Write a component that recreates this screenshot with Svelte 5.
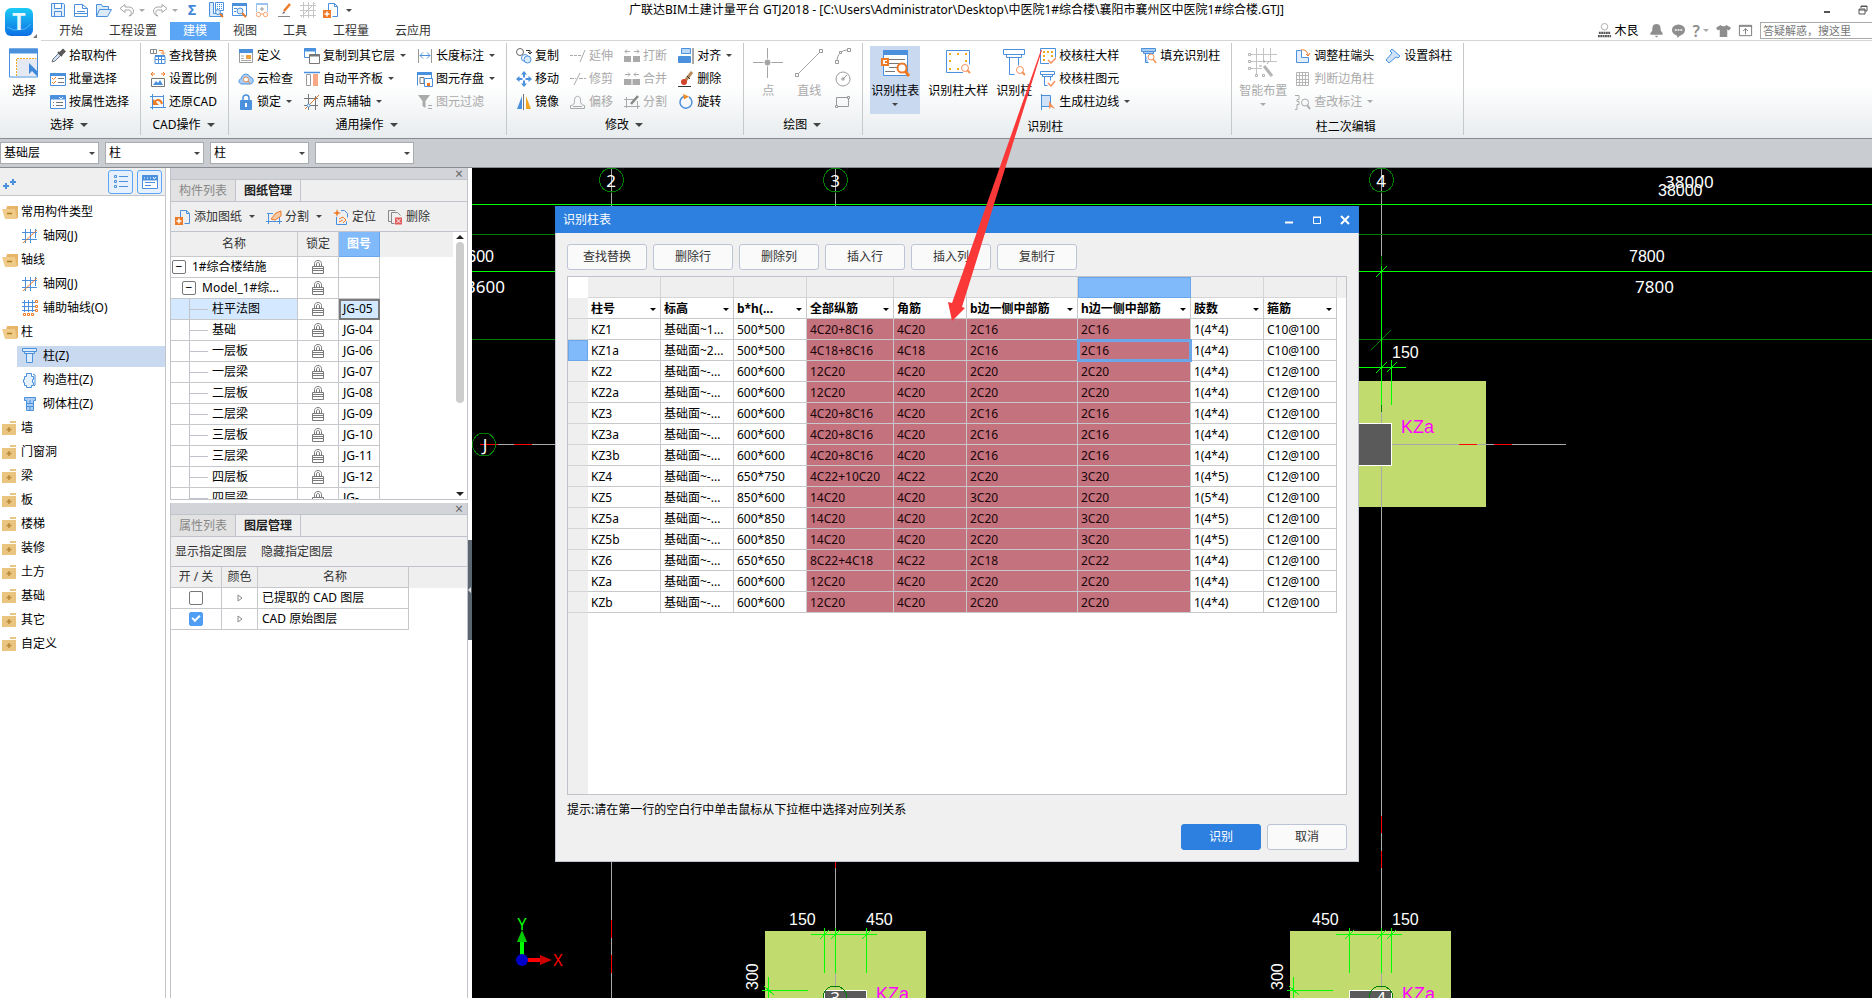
<script lang="ts">
  type Item = { icon: string; label?: string; menu?: boolean; off?: boolean; active?: boolean };

  type Group = {
    label: string;
    menu?: boolean;
    tight?: boolean;
    big: Item[];
    cols: Item[][];
  };

  type Node = { label: string; icon?: string; open?: boolean; active?: boolean };

  // small icons use a 16 unit box, names ending in "Big" a 30 unit box
  const icons: Record<string, string> = {
    save: '<path d="M1.5 1.5h12l1 1v12h-13zM4.5 1.5v5h7v-5M4.5 14.5v-5h7v5" fill="#e3effc"/>',
    doc: '<path d="M1.5 2.5h8l5 4v8h-13zM9.5 2.5v4h5M4 9.5h8M1.5 11.5h13" fill="#fff"/>',
    open: '<path d="M.5 14.5v-12h5l1 2h6v3M.5 14.5l3-7h12l-4 7z" fill="#dcebfb"/>',
    undo: '<path d="M6 2.5l-5 4 5 4v-2.5h4c3 0 3 5 0 6 6-1 6-9 0-9h-4z" stroke="#a6a6a6"/>',
    redo: '<path d="M10 2.5l5 4-5 4v-2.5h-4c-3 0-3 5 0 6-6-1-6-9 0-9h4z" stroke="#a6a6a6"/>',
    sum: '<text x="3" y="13" font-size="14" font-weight="700" fill="#3f87d9" stroke="none">Σ</text>',
    calc: '<path d="M1.5 .5v14h13v-3h-9v-11z" fill="#dcebfb"/><path d="M7.500.5h8v8h-8z" fill="#fff"/><path d="M9 2.5h6M9 4.5h6M9 6.5h6" stroke-dasharray="1 1"/><circle cx="10" cy="10" r="2.500" fill="#dcebfb"/><path d="M12 12l3 3" stroke="#e8792c" stroke-width="2"/>',
    view: '<path d="M1.5 1.5h14v12h-14z" fill="#fff"/><path d="M1 2.500h15" stroke-width="3"/><path d="M3 6.500h3M3 9.500h2"/><circle cx="9" cy="9" r="3" fill="#dcebfb"/><path d="M11 11l4 4" stroke="#e8792c" stroke-width="2"/>',
    glasses: '<path d="M2.500 10v-8.500h11v8.500" stroke="#9cc3ee"/><path d="M2 2h12" stroke="#9cc3ee" stroke-width="2"/><path d="M8 5v4M6 7h4" stroke="#999"/><g stroke="#f5a26c"><circle cx="4.500" cy="12.500" r="2.200"/><circle cx="11.500" cy="12.500" r="2.200"/><path d="M7 12h2"/></g>',
    pen: '<path d="M13 2l-6 7" stroke="#ee7a26" stroke-width="2.500"/><path d="M7 9l-2 3 3-1z" fill="#666" stroke="none"/><path d="M1 14.500h12" stroke="#888"/>',
    mesh: '<path d="M3.500 0v16M8.500 0v16M13.500 0v16M0 3.500h16M0 8.500h16M0 13.500h16M1 15L15 1" stroke="#c6c6c6"/>',
    addDoc: '<path d="M5.500 8v-6.500h6l3 3v10h-5M11.500 1.500v3h3"/><path d="M0 8h8v8h-8z" fill="#ee7a26" stroke="none"/><path d="M4 9.500v5M1.500 12h5" stroke="#fff" stroke-width="1.500"/>',

    selectBig: '<path d="M.500 1h28v28h-28z" fill="#fff"/><path d="M0 3h29" stroke-width="5"/><path d="M8 11h20v17h-20z" fill="#e4e9f4" stroke="none"/><path d="M7.500 28v-17.500h20" stroke="#f0a81c" stroke-dasharray="2 1"/><path d="M20 15v11l3-3 5 5v-5z" fill="#3f87d9" stroke="none"/>',
    dropper: '<path d="M2 14l1-3 6-6 2 2-6 6z" fill="#cfe2f7" stroke="#777"/><path d="M8 4l4 4M10 5l3-3 1.500 1.500-3 3" stroke="#555" stroke-width="2"/>',
    batch: '<path d="M.500 2.500h15v12h-15z" fill="#fff"/><path d="M0 3.500h16" stroke-width="3"/><path d="M8 7.500h6M8 11.500h6" stroke="#777"/><path d="M2 7l1.500 1.500L6 6M2 11l1.500 1.500L6 10" stroke="#ee7a26"/>',
    props: '<path d="M.500 1.500h15v13h-15z" fill="#fff"/><path d="M0 3.500h16" stroke-width="4"/><path d="M9 3l2 2 2-2" stroke="#fff"/><path d="M6 8.500h7M6 11.500h7M3 8.500h1M3 11.500h1" stroke="#777"/>',
    replace: '<path d="M.500 1.500h6v4h-6zM3.500 1.500v4" stroke="#888"/><path d="M9 2.500h4v3M11 4.500l2 2 2-2" stroke="#ee7a26"/><path d="M5 8.500h10v7h-10zM5 7.500h10M8.500 8v8M11.500 8v8M5 11.500h10"/>',
    scale: '<path d="M1.500 7.500h13v8h-13z" fill="#fff" stroke="#777"/><path d="M3 14l3-4 2 2 2-3 3 5z" fill="#4a90dd" stroke="none"/><path d="M1 3h4M15 3h-4M3 1L1 3l2 2M13 1l2 2-2 2" stroke="#ee7a26"/>',
    restore: '<path d="M2.500 0v15.500M0 13.500h16M0 2.500h13M13.500 1v13"/><path d="M5 8c1-3 6-3 7 2" stroke="#ee7a26" stroke-width="2"/><path d="M3 5v6h6z" fill="#ee7a26" stroke="none"/>',
    define: '<path d="M1.500 1.500h13v13h-13z" fill="#fff" stroke="#999"/><path d="M1 3h14" stroke-width="4"/><path d="M8 7h5v4h-5z" fill="#f0a040" stroke="none"/><path d="M3 8h3M3 10.500h3M3 12.500h10" stroke="#aaa"/>',
    cloud: '<path d="M4 13c-4 0-4-5-.500-5.500 0-5 7-6 8.500-1.500 4 0 4.500 7 0 7z" fill="#a9cdf4"/><circle cx="8" cy="8.500" r="2.500" stroke="#e8894a" fill="#fff"/><path d="M10 10l2.500 3" stroke="#e8894a"/>',
    lock: '<path d="M5 7v-3c0-4 6-4 6 0v3" stroke-width="1.500"/><path d="M2.500 6.500h11v9h-11z" fill="#4a90dd"/><path d="M8 9v4" stroke="#fff" stroke-width="2"/>',
    layers: '<path d="M.500.500h11v9h-11z" fill="#fff"/><path d="M0 2h12" stroke-width="3"/><path d="M5.500 6.500h10v9h-10z" fill="#fff" stroke="#777"/><path d="M5 7.500h11" stroke="#777" stroke-width="2"/>',
    slab: '<path d="M0 1.500h16" stroke-width="1.500"/><path d="M2.500 3.500h4v11h-4z" stroke="#999"/><path d="M9 3h5v12h-5z" fill="#f8a884" stroke="none"/>',
    axis2: '<path d="M4.500 0v16M11.500 2v14M0 4.500h14M0 11.500h14" stroke="#777"/><path d="M1 15L15 1" stroke="#ee7a26"/><circle cx="4.500" cy="11.500" r="1.500" fill="#fff"/>',
    length: '<path d="M1.500 1v14M14.500 1v14" stroke="#999"/><path d="M3 7.500h10M6 4.500l-3 3 3 3M10 4.500l3 3-3 3"/>',
    store: '<path d="M.500 14.500v-13h14v6" /><path d="M0 2.500h15" stroke-width="3"/><path d="M3 6.500h4v6h-4z" stroke="#777"/><path d="M7.500 7.500h8v8h-8z" fill="#fff"/><path d="M10 12h3v3h-3z" fill="#ee7a26" stroke="none"/>',
    filter: '<path d="M1 1h12l-4.500 6v7l-3-2v-5z" fill="#aaa" stroke="none"/><path d="M11 11.500h4M11 14.500h4" stroke="#aaa"/>',
    copy: '<circle cx="4" cy="4" r="3.500" stroke="#666"/><path d="M10 2.500h4v3M12 4l2 2 2-2" stroke="#333"/><circle cx="9" cy="10" r="3.500"/><circle cx="11.500" cy="11.500" r="3.500" fill="#dcebfb"/>',
    move: '<path d="M8 0l3 3.500h-2v3h-2v-3h-2zM8 16l3-3.500h-2v-3h-2v3h-2zM0 8l3.500-3v2h3v2h-3v2zM16 8l-3.500-3v2h-3v2h3v2z" fill="#4a90dd" stroke="none"/>',
    mirror: '<path d="M6 2v13h-5z" fill="#4a90dd" stroke="none"/><path d="M7.500 0v16" stroke="#777"/><path d="M10 2v13h5z" fill="#f2a51e" stroke="none"/>',
    extend: '<path d="M0 7.500h11" stroke="#aaa" stroke-dasharray="3 1"/><path d="M10 14l5-12" stroke="#aaa"/>',
    trim: '<path d="M0 7.500h6M9 7.500h7" stroke="#aaa" stroke-dasharray="4 1"/><path d="M4 14l6-12" stroke="#aaa"/>',
    offset: '<path d="M.500 14.500v-3c3 0 4-2 4-4-1-7 7-7 6 0 0 2 2 4 4 4v3z" stroke="#aaa"/><path d="M3 12.500h9" stroke="#aaa"/>',
    breakOff: '<path d="M0 8h7v6h-7zM9 8h7v6h-7z" fill="#aaa" stroke="none"/><path d="M1 3.500h5M10 3.500h5M3 1.500l-2 2 2 2M13 1.500l2 2-2 2" stroke="#aaa"/>',
    merge: '<path d="M0 8h7.500v6h-7.500zM8.500 8h7.500v6h-7.500z" fill="#aaa" stroke="none"/><path d="M1 3.500h5M10 3.500h5M4 1.500l2 2-2 2M12 1.500l-2 2 2 2" stroke="#aaa"/>',
    split: '<path d="M2.500 3v11M0 5.500h10M0 12.500h16M13.500 7v8" stroke="#aaa"/><path d="M14 2l-7 8" stroke="#888" stroke-width="2.500"/>',
    align: '<path d="M3.500.500h9v5h-9z" fill="#b9d7f7"/><path d="M.500 8.500h12v6h-12z" fill="#4a90dd"/><path d="M15 0v16" stroke="#555"/>',
    erase: '<path d="M14 1l-7 9" stroke="#b98a5a" stroke-width="3"/><path d="M9 5l3 3" stroke="#333"/><ellipse cx="6" cy="11" rx="3" ry="3" fill="#d2432c" stroke="none"/><path d="M0 15.500h13" stroke="#333"/>',
    rotate: '<path d="M6 2.500a6 6 0 1 0 5 .500" stroke-width="1.500"/><path d="M5 0l6 2.500-5 3z" fill="#ee8a26" stroke="none"/>',

    pointBig: '<path d="M14.500 0v30M0 14.500h30" stroke="#a4a4a4"/><circle cx="14.500" cy="14.500" r="3.500" fill="#a4a4a4" stroke="#fff"/>',
    lineBig: '<path d="M4 26L26 4" stroke="#a4a4a4"/><path d="M1.500 25.500h3v3h-3zM25.500 1.500h3v3h-3z" fill="#fff" stroke="#999"/>',
    arc: '<path d="M2 13c0-7 5-11 11-11" stroke="#999"/><path d="M.500 12.500h3v3h-3zM12.500.500h3v3h-3zM4.500 3.500h2v2h-2z" fill="#fff" stroke="#999"/>',
    circle: '<circle cx="8" cy="8" r="7" stroke="#999"/><path d="M8 8l4-4M7 7h2v2h-2z" stroke="#999"/>',
    rect: '<path d="M1.500 3.500h12v9h-12z" stroke="#999"/><path d="M.500 11.500h2v2h-2zM12.500 2.500h2v2h-2z" fill="#fff" stroke="#999"/>',
    tableBig: '<path d="M3.500 2.500h24v25h-24z" fill="#fff"/><path d="M3 4.500h25" stroke-width="5"/><path d="M9 11.500h16M9 15.500h16M9 19.500h9M5 23.500h10" stroke="#777"/><path d="M2 11h6v6h-6zM5 14h3" fill="#fff" stroke="#ee7a26" stroke-width="2"/><circle cx="22" cy="20" r="4.500" fill="#fff" stroke="#ee7a26" stroke-width="2"/><path d="M25 23l4 5" stroke="#ee7a26" stroke-width="3"/>',
    sampleBig: '<path d="M20 24.500h-16.500v-22h23v14" fill="#fff"/><path d="M6 5h2v2h-2zM14 5h2v2h-2zM22 5h2v2h-2zM6 12h2v2h-2zM22 12h2v2h-2zM6 20h2v2h-2zM14 20h2v2h-2z" fill="#f0a81c" stroke="none"/><circle cx="22" cy="20" r="3.500" stroke="#f5925c"/><path d="M24 22l3 3" stroke="#f5925c" stroke-width="2"/>',
    columnBig: '<path d="M4.500 1.500h21v5h-21zM7.500 6.500h15v3h-15zM10.500 9.500v17h5M19.500 9.500v8"/><circle cx="21" cy="22" r="3.500" stroke="#f5925c"/><path d="M23 24l3 3" stroke="#f5925c" stroke-width="2"/>',
    checkSample: '<path d="M9 15.500h-8.500v-15h15v9" fill="#fff"/><path d="M3 3h2v2h-2zM7 3h2v2h-2zM11 3h2v2h-2zM3 7h2v2h-2zM11 7h2v2h-2zM3 11h2v2h-2z" fill="#f0a81c" stroke="none"/><path d="M8 12l3 3 5-5" stroke="#f5925c" stroke-width="1.500"/>',
    checkEl: '<path d="M.500.500h14v3h-14zM2.500 3.500h10v2h-10zM4.500 5.500v9h3M10.500 5.500v4"/><path d="M8 12l3 3 4-5" stroke="#f5925c" stroke-width="1.500"/>',
    edge: '<path d="M1.500 0v16M1.500 1.500h9v11h-9" fill="#cfe2f7"/><path d="M9 7v8l2-2 4 2z" fill="#f5925c" stroke="none"/>',
    fill: '<path d="M.500.500h14v3h-14zM2.500 3.500h10v2h-10zM4.500 5.500v9h3" fill="#a9cdf4"/><circle cx="10" cy="9" r="3" fill="#fff" stroke="#f5925c"/><path d="M12 11l3 4" stroke="#f5925c" stroke-width="1.500"/>',
    smartBig: '<path d="M8.500 0v27M15.500 0v14M22.500 0v13M2 6.500h27M2 13.500h27M2 20.500h12" stroke="#c4c4c4"/><path d="M.500 5.500h2v2h-2zM.500 12.500h2v2h-2zM.500 19.500h2v2h-2zM7.500 26.500h2v2h-2zM14.500 26.500h2v2h-2z" fill="#fff" stroke="#b4b4b4"/><path d="M16 18l8 10" stroke="#b4b4b4" stroke-width="3"/><path d="M16 12v3M11 18h3M21 13l-2 3" stroke="#aaa"/>',
    head: '<path d="M1.500 2.500h5v7h7v5h-12z" fill="#e3effc"/><path d="M6 2c4-1 7 2 7 6M11 6l2 2 2-3" stroke="#ee7a26"/>',
    judge: '<path d="M1.500 1.500h12v13h-12zM4.500 1.500v13M7.500 1.500v13M10.500 1.500v13M1.500 4.500h12M1.500 8.500h12M1.500 11.500h12" stroke="#b4b4b4"/>',
    query: '<path d="M0 1.500h4v4h-2v2h2v3h-2v5h-2" stroke="#aaa"/><circle cx="10" cy="8.500" r="3.500" stroke="#aaa"/><path d="M12 11l3 4" stroke="#aaa" stroke-width="2"/>',
    slant: '<path d="M7 1l8 7-2 2-2-1-7 6-3-3 6-7-2-2z" fill="#cfe2f7"/>',

    axisNet: '<path d="M3.500 1v14M8.500 1v14M13.500 1v9M0 4.500h15M0 11.500h15"/><path d="M1 15L15 2" stroke="#ee7a26"/>',
    axisAux: '<path d="M2.500 0v12M6.500 0v12M10.500 0v12M0 2.500h13M0 6.500h13M0 10.500h13"/><path d="M13.500.500h2v2h-2zM13.500 5.500h2v2h-2zM13.500 9.500h2v2h-2zM1.500 13.500h2v2h-2zM5.500 13.500h2v2h-2zM9.500 13.500h2v2h-2z" stroke="#ee7a26"/>',
    column: '<path d="M.500.500h14v3h-14zM2.500 3.500h10v2h-10zM4.500 5.500h6v9h-6z" fill="#dcebfb"/>',
    structCol: '<path d="M4.500 1.500h5v3h2v3h-1v3h1v3h-2v2h-5v-2h-2v-3h-1v-3h1v-3h2z" fill="#e7f1fc"/><path d="M11 2l2 1v10l-1 1"/>',
    brickCol: '<path d="M2.500 1.500h11v3h-2v10h-7v-10h-2z" fill="#a9cdf4"/><path d="M4 7.500h7M4 10.500h7M8 4v3M8 10v4"/>',
    folder: '<path d="M8 1h6v2h-6zM0 4h14v11h-14z" fill="#e9c581" stroke="none"/><path d="M7 7v5M4.500 9.500h5" stroke="#b98a33" stroke-width="1.500"/>',
    folderOpen: '<path d="M5 2h11v12h-3l-1-8h-8z" fill="#e5b667" stroke="none"/><path d="M0 5h13l2 10h-12z" fill="#efca88" stroke="none"/><path d="M5 9.500h5" stroke="#b07f22" stroke-width="1.500"/>',
    plus2: '<path d="M4 9v6M1 12h6M11 5v6M8 8h6" stroke-width="2"/>',
    listView: '<path d="M1.500 1.500h2v2h-2zM1.500 6.500h2v2h-2zM1.500 11.500h2v2h-2zM6 2.500h9M6 7.500h9M6 12.500h9"/>',
    cardView: '<path d="M.500 1.500h15v13h-15z" fill="#fff"/><path d="M0 4h16" stroke-width="5"/><path d="M2 4h1M5 4h1M8 4h1M11 3l1.500 2L14 3" stroke="#fff"/><path d="M3 8.500h10M3 11.500h6"/>',
    divide: '<path d="M2.500 4v11M0 12.500h16M13.500 8v7M1 4.500h6"/><path d="M5 10l5-6 5-2v5l-6 4z" fill="#f8c9a4" stroke="#ee7a26"/>',
    locate: '<path d="M3.500 8v7.500h10v-3M8 1.500h3.500l3 3v4"/><path d="M4 0l1 3 3 1-3 1-1 3-1-3-3-1 3-1z" fill="#ee7a26" stroke="none"/><path d="M6 10l4-2 3 3-3 3M6 13l4-2" stroke="#ee7a26"/>',
    remove: '<path d="M4 12.500h-2.500v-11h7M4.500 3.500h6l3 3M4.500 3.500v11h3" stroke="#888"/><path d="M8 8.500h7v7h-7z" fill="#e45b5b" stroke="none"/><path d="M9.500 10l4 4M13.500 10l-4 4" stroke="#fff"/>',
    padlock: '<path d="M4.500 7v-2.500c0-4 7-4 7 0v2.500M6.500 7v-2c0-2 3-2 3 0v2M2.500 7.500h11v7h-11zM2.500 9.500h11M2.500 11.500h11" stroke="#7a7a7a"/>',

    avatar: '<circle cx="8" cy="4" r="3.500" stroke="#aaa"/><path d="M2 10.500h12M1 14h14" stroke="#555" stroke-width="2.500" stroke-dasharray="2 .500"/>',
    bell: '<path d="M8 1c4 0 4.500 3 4.500 7l2 3v1.500h-13v-1.500l2-3c0-4 .500-7 4.500-7zM6 13.500h4l-2 2z" fill="#8e8e8e" stroke="none"/>',
    chat: '<ellipse cx="8" cy="7.500" rx="7" ry="6" fill="#8e8e8e" stroke="none"/><path d="M6 12l1 4 4-4z" fill="#8e8e8e" stroke="none"/><path d="M4 7.500h2M7 7.500h2M10 7.500h2" stroke="#fff" stroke-width="1.500"/>',
    shirt: '<path d="M5 2c1 2 5 2 6 0l5 3-2 3-2-1v8h-8v-8l-2 1-2-3z" fill="#8e8e8e" stroke="none"/>',
    upload: '<path d="M1.500 2.500h13v11h-13zM1 3.500h14M8 12v-6M5.500 8.500L8 6l2.500 2.500" stroke="#777"/>'
  };

  const quick = [
    { icon: 'save', title: '保存' },
    { icon: 'doc', title: '新建' },
    { icon: 'open', title: '打开' },
    { icon: 'undo', title: '撤销', menu: true },
    { icon: 'redo', title: '恢复', menu: true },
    { icon: 'sum', title: '汇总计算' },
    { icon: 'calc', title: '查看工程量' },
    { icon: 'view', title: '查看计算式' },
    { icon: 'glasses', title: '查看钢筋量' },
    { icon: 'pen', title: '编辑钢筋' },
    { icon: 'mesh', title: '钢筋三维' },
    { icon: 'addDoc', title: '添加图纸' }
  ];

  const tabs = ['开始', '工程设置', '建模', '视图', '工具', '工程量', '云应用'];
  let activeTab = $state('建模');

  const groups: Group[] = [
    {
      label: '选择',
      menu: true,
      big: [{ icon: 'selectBig', label: '选择' }],
      cols: [[
        { icon: 'dropper', label: '拾取构件' },
        { icon: 'batch', label: '批量选择' },
        { icon: 'props', label: '按属性选择' }
      ]]
    },
    {
      label: 'CAD操作',
      menu: true,
      big: [],
      cols: [[
        { icon: 'replace', label: '查找替换' },
        { icon: 'scale', label: '设置比例' },
        { icon: 'restore', label: '还原CAD' }
      ]]
    },
    {
      label: '通用操作',
      menu: true,
      big: [],
      cols: [
        [
          { icon: 'define', label: '定义' },
          { icon: 'cloud', label: '云检查' },
          { icon: 'lock', label: '锁定', menu: true }
        ],
        [
          { icon: 'layers', label: '复制到其它层', menu: true },
          { icon: 'slab', label: '自动平齐板', menu: true },
          { icon: 'axis2', label: '两点辅轴', menu: true }
        ],
        [
          { icon: 'length', label: '长度标注', menu: true },
          { icon: 'store', label: '图元存盘', menu: true },
          { icon: 'filter', label: '图元过滤', off: true }
        ]
      ]
    },
    {
      label: '修改',
      menu: true,
      big: [],
      cols: [
        [{ icon: 'copy', label: '复制' }, { icon: 'move', label: '移动' }, { icon: 'mirror', label: '镜像' }],
        [{ icon: 'extend', label: '延伸', off: true }, { icon: 'trim', label: '修剪', off: true }, { icon: 'offset', label: '偏移', off: true }],
        [{ icon: 'breakOff', label: '打断', off: true }, { icon: 'merge', label: '合并', off: true }, { icon: 'split', label: '分割', off: true }],
        [{ icon: 'align', label: '对齐', menu: true }, { icon: 'erase', label: '删除' }, { icon: 'rotate', label: '旋转' }]
      ]
    },
    {
      label: '绘图',
      menu: true,
      big: [{ icon: 'pointBig', label: '点', off: true }, { icon: 'lineBig', label: '直线', off: true }],
      cols: [[{ icon: 'arc' }, { icon: 'circle' }, { icon: 'rect' }]]
    },
    {
      label: '识别柱',
      tight: true,
      big: [
        { icon: 'tableBig', label: '识别柱表', menu: true, active: true },
        { icon: 'sampleBig', label: '识别柱大样' },
        { icon: 'columnBig', label: '识别柱' }
      ],
      cols: [
        [
          { icon: 'checkSample', label: '校核柱大样' },
          { icon: 'checkEl', label: '校核柱图元' },
          { icon: 'edge', label: '生成柱边线', menu: true }
        ],
        [{ icon: 'fill', label: '填充识别柱' }]
      ]
    },
    {
      label: '柱二次编辑',
      tight: true,
      big: [{ icon: 'smartBig', label: '智能布置', menu: true, off: true }],
      cols: [
        [
          { icon: 'head', label: '调整柱端头' },
          { icon: 'judge', label: '判断边角柱', off: true },
          { icon: 'query', label: '查改标注', menu: true, off: true }
        ],
        [{ icon: 'slant', label: '设置斜柱' }]
      ]
    }
  ];

  const selectors = [
    { name: '楼层', value: '基础层' },
    { name: '构件类别', value: '柱' },
    { name: '构件类型', value: '柱' },
    { name: '构件', value: '' }
  ];

  const tree: Node[] = [
    { label: '常用构件类型', open: true },
    { label: '轴网(J)', icon: 'axisNet' },
    { label: '轴线', open: true },
    { label: '轴网(J)', icon: 'axisNet' },
    { label: '辅助轴线(O)', icon: 'axisAux' },
    { label: '柱', open: true },
    { label: '柱(Z)', icon: 'column', active: true },
    { label: '构造柱(Z)', icon: 'structCol' },
    { label: '砌体柱(Z)', icon: 'brickCol' },
    ...['墙', '门窗洞', '梁', '板', '楼梯', '装修', '土方', '基础', '其它', '自定义'].map((label) => ({ label }))
  ];

  const drawings = [
    { name: '1#综合楼结施', no: '', depth: 0 },
    { name: 'Model_1#综...', no: '', depth: 1 },
    { name: '柱平法图', no: 'JG-05', depth: 2 },
    { name: '基础', no: 'JG-04', depth: 2 },
    { name: '一层板', no: 'JG-06', depth: 2 },
    { name: '一层梁', no: 'JG-07', depth: 2 },
    { name: '二层板', no: 'JG-08', depth: 2 },
    { name: '二层梁', no: 'JG-09', depth: 2 },
    { name: '三层板', no: 'JG-10', depth: 2 },
    { name: '三层梁', no: 'JG-11', depth: 2 },
    { name: '四层板', no: 'JG-12', depth: 2 },
    { name: '四层梁', no: 'JG-', depth: 2 }
  ];
  let currentDrawing = $state('柱平法图');

  let layers = $state([
    { name: '已提取的 CAD 图层', on: false },
    { name: 'CAD 原始图层', on: true }
  ]);

  const columns = ['柱号', '标高', 'b*h(...', '全部纵筋', '角筋', 'b边一侧中部筋', 'h边一侧中部筋', '肢数', '箍筋'];
  const rows = [
    ['KZ1', '基础面~1...', '500*500', '4C20+8C16', '4C20', '2C16', '2C16', '1(4*4)', 'C10@100'],
    ['KZ1a', '基础面~2...', '500*500', '4C18+8C16', '4C18', '2C16', '2C16', '1(4*4)', 'C10@100'],
    ['KZ2', '基础面~-...', '600*600', '12C20', '4C20', '2C20', '2C20', '1(4*4)', 'C12@100'],
    ['KZ2a', '基础面~-...', '600*600', '12C20', '4C20', '2C20', '2C20', '1(4*4)', 'C12@100'],
    ['KZ3', '基础面~-...', '600*600', '4C20+8C16', '4C20', '2C16', '2C16', '1(4*4)', 'C12@100'],
    ['KZ3a', '基础面~-...', '600*600', '4C20+8C16', '4C20', '2C16', '2C16', '1(4*4)', 'C12@100'],
    ['KZ3b', '基础面~-...', '600*600', '4C20+8C16', '4C20', '2C16', '2C16', '1(4*4)', 'C12@100'],
    ['KZ4', '基础面~-...', '650*750', '4C22+10C20', '4C22', '2C20', '3C20', '1(4*5)', 'C12@100'],
    ['KZ5', '基础面~-...', '850*600', '14C20', '4C20', '3C20', '2C20', '1(5*4)', 'C12@100'],
    ['KZ5a', '基础面~-...', '600*850', '14C20', '4C20', '2C20', '3C20', '1(4*5)', 'C12@100'],
    ['KZ5b', '基础面~-...', '600*850', '14C20', '4C20', '2C20', '3C20', '1(4*5)', 'C12@100'],
    ['KZ6', '基础面~-...', '650*650', '8C22+4C18', '4C22', '2C18', '2C22', '1(4*4)', 'C12@100'],
    ['KZa', '基础面~-...', '600*600', '12C20', '4C20', '2C20', '2C20', '1(4*4)', 'C12@100'],
    ['KZb', '基础面~-...', '600*600', '12C20', '4C20', '2C20', '2C20', '1(4*4)', 'C12@100']
  ];
  let cell = $state({ row: 1, col: 6 });

  const gridButtons = ['查找替换', '删除行', '删除列', '插入行', '插入列', '复制行'];

  // footings along the bottom of the drawing: left edge, axis x, column left edge, tick positions
  const footings = [
    { x: 293, axis: 363, col: 352, ticks: [352, 363, 394], left: ['150', 317], right: ['450', 394], no: '3', name: 404 },
    { x: 818, axis: 909, col: 877, ticks: [877, 909, 919], left: ['450', 840], right: ['150', 920], no: '4', name: 930 }
  ];
</script>

{#snippet icon(name: string)}
  <svg
    class={name.endsWith('Big') ? 'icon big' : 'icon'}
    viewBox={name.endsWith('Big') ? '0 0 30 30' : '0 0 16 16'}
    fill="none"
    stroke="#4a90dd"
    aria-hidden="true"
  >{@html icons[name]}</svg>
{/snippet}

<div class="app">
  <header>
    <button class="logo" aria-label="应用菜单">
      <svg viewBox="0 0 28 28" aria-hidden="true">
        <defs>
          <linearGradient id="logo" x1="0" y1="0" x2="0" y2="1">
            <stop offset="0" stop-color="#1ccbf5" />
            <stop offset="1" stop-color="#0d6fe4" />
          </linearGradient>
        </defs>
        <rect width="28" height="28" rx="6" fill="url(#logo)" />
        <path d="M2 19l7 3 11-1 6-5" fill="none" stroke="#4db6f8" />
        <text x="14" y="22" text-anchor="middle" font-family="Lato" font-weight="900" font-size="22" fill="#e9f7ff">T</text>
      </svg>
      <span class="corner"></span>
    </button>
    <div class="head-main">
      <div class="title-row">
        <div class="quick">
          {#each quick as q}
            <button aria-label={q.title}>{@render icon(q.icon)}{#if q.menu}<i class="arrow off"></i>{/if}</button>
          {/each}
          <button aria-label="自定义快速访问"><i class="arrow more"></i></button>
        </div>
        <h1>广联达BIM土建计量平台 GTJ2018 - [C:\Users\Administrator\Desktop\中医院1#综合楼\襄阳市襄州区中医院1#综合楼.GTJ]</h1>
        <div class="win">
          <button aria-label="最小化"><svg viewBox="0 0 10 10"><path d="M2 7h6" stroke="#555" stroke-width="2" /></svg></button>
          <button aria-label="还原"><svg viewBox="0 0 10 10"><path d="M3 3v-2h6v5h-2M1 4h6v5h-6zM1 5h6M3 1.500h6" fill="none" stroke="#555" /></svg></button>
        </div>
      </div>
      <div class="tab-row">
        <nav>
          {#each tabs as tab}
            <button class:active={tab === activeTab} onclick={() => (activeTab = tab)}>{tab}</button>
          {/each}
        </nav>
        <div class="user">
          <button class="who">{@render icon('avatar')}木艮</button>
          <button aria-label="消息">{@render icon('bell')}</button>
          <button aria-label="反馈">{@render icon('chat')}</button>
          <button class="help" aria-label="帮助">?<i class="arrow off"></i></button>
          <button aria-label="皮肤">{@render icon('shirt')}</button>
          <button aria-label="收起功能区">{@render icon('upload')}</button>
          <input aria-label="搜索" placeholder="答疑解惑，搜这里" />
        </div>
      </div>
    </div>
  </header>

  <div class="ribbon">
    {#each groups as group}
      <section class="group" class:tight={group.tight}>
        <div class="tools">
          {#each group.big as item}
            <button class="tool-big" class:active={item.active} disabled={item.off}>
              {@render icon(item.icon)}
              <span>{item.label}</span>
              {#if item.menu}<i class="arrow" class:off={item.off}></i>{/if}
            </button>
          {/each}
          {#if group.cols.length}
            <div class="cols">
              {#each group.cols as col}
                <div class="col">
                  {#each col as item}
                    <button class="tool" disabled={item.off} aria-label={item.label ?? item.icon}>
                      {@render icon(item.icon)}{item.label ?? ''}
                      {#if item.menu}<i class="arrow" class:off={item.off}></i>{/if}
                    </button>
                  {/each}
                </div>
              {/each}
            </div>
          {/if}
        </div>
        <button class="group-label">{group.label}{#if group.menu}<i class="arrow wide"></i>{/if}</button>
      </section>
    {/each}
  </div>

  <div class="selectors">
    {#each selectors as s}
      <label>
        <select aria-label={s.name}><option>{s.value}</option></select>
      </label>
    {/each}
  </div>

  <main>
    <aside class="tree">
      <div class="tree-head">
        <button aria-label="添加">{@render icon('plus2')}</button>
        <button class="mode" aria-label="列表">{@render icon('listView')}</button>
        <button class="mode" aria-label="卡片">{@render icon('cardView')}</button>
      </div>
      <ul>
        {#each tree as node}
          <li>
            <button class:child={node.icon} class:active={node.active}>
              {@render icon(node.icon ?? (node.open ? 'folderOpen' : 'folder'))}{node.label}
            </button>
          </li>
        {/each}
      </ul>
    </aside>

    <div class="docks">
      <section class="dock drawings">
        <div class="dock-bar"><button aria-label="关闭图纸管理">×</button></div>
        <div class="dock-tabs">
          <button>构件列表</button>
          <button class="active">图纸管理</button>
        </div>
        <div class="dock-tools">
          <button>{@render icon('addDoc')}添加图纸<i class="arrow"></i></button>
          <button>{@render icon('divide')}分割<i class="arrow"></i></button>
          <button>{@render icon('locate')}定位</button>
          <button>{@render icon('remove')}删除</button>
        </div>
        <div class="sheet">
          <div class="sheet-body">
            <table>
              <thead>
                <tr><th class="name">名称</th><th class="lock">锁定</th><th class="no active">图号</th></tr>
              </thead>
              <tbody>
                {#each drawings as d}
                  <tr class:current={d.name === currentDrawing} onclick={() => (currentDrawing = d.name)}>
                    <td class="name">
                      <div class="node depth{d.depth}">
                        {#if d.depth < 2}<button aria-label="折叠">−</button>{:else}<i class="guide"></i>{/if}
                        {d.name}
                      </div>
                    </td>
                    <td class="lock">{@render icon('padlock')}</td>
                    <td class="no">{d.no}</td>
                  </tr>
                {/each}
              </tbody>
            </table>
          </div>
          <div class="scroll"><i class="up"></i><div class="track"><div class="thumb"></div></div><i class="down"></i></div>
        </div>
      </section>

      <section class="dock layers">
        <div class="dock-bar"><button aria-label="关闭图层管理">×</button></div>
        <div class="dock-tabs">
          <button>属性列表</button>
          <button class="active">图层管理</button>
        </div>
        <div class="dock-tools plain">
          <button>显示指定图层</button>
          <button>隐藏指定图层</button>
        </div>
        <div class="layer-body">
          <table>
            <thead>
              <tr><th class="on">开 / 关</th><th class="color">颜色</th><th class="title">名称</th></tr>
            </thead>
            <tbody>
              {#each layers as layer}
                <tr>
                  <td class="on"><input type="checkbox" aria-label={layer.name} bind:checked={layer.on} /></td>
                  <td class="color"><svg class="tri" viewBox="0 0 6 8"><path d="M1 1l4 3-4 3z" fill="none" stroke="#888" /></svg></td>
                  <td class="title">{layer.name}</td>
                </tr>
              {/each}
            </tbody>
          </table>
        </div>
      </section>
    </div>

    <div class="splitter"><button aria-label="收起面板"></button></div>

    <div class="canvas">
      <svg width="100%" height="100%" fill="none" shape-rendering="crispEdges">
        <g fill="#c1db6e">
          <rect x="853" y="213" width="161" height="126" />
          {#each footings as f}<rect x={f.x} y="763" width="161" height="126" />{/each}
        </g>

        <g stroke="#a9a9a9">
          <path d="M139.500 0V830M363.500 0V820M909.500 0V820M12 276.500H900M919 276.500H1094" />
        </g>
        <g stroke="#f00">
          <path d="M139.500 752v18M139.500 787v18M363.500 694v6M909.500 648v17M909.500 683v17M8 276.500h18M42 276.500h18M987 276.500h18M1022 276.500h18" />
        </g>

        <g stroke="#008000">
          <line x1="0" y1="66.500" x2="100%" y2="66.500" />
          <line x1="0" y1="171.500" x2="100%" y2="171.500" />
          <path d="M909.500 88v10M909.500 237v7M899 182l20-20" />
          <circle cx="139.500" cy="12" r="12" />
          <circle cx="363.500" cy="12" r="12" />
          <circle cx="909.500" cy="12" r="12" />
          <circle cx="12" cy="276.500" r="11.500" />
        </g>
        <g stroke="#0f0">
          <line x1="0" y1="36.500" x2="100%" y2="36.500" />
          <line x1="0" y1="103.500" x2="100%" y2="103.500" />
          <path d="M909.500 98v139M919.500 192v45M880 199.500h54M904 109l11-11M904 205l11-11M915 204l10-10" />
        </g>

        <rect x="877.500" y="255.500" width="42" height="42" fill="#5a5a5a" stroke="#fff" />

        {#each footings as f}
          <g stroke="#0f0">
            <path d="M{f.ticks[0] - 13} 766.500h66M{f.x - 3} 822.500h46M{f.x + 3}.500 809v30M{f.x - 1} 818l10 9" />
            {#each f.ticks as t}<path d="M{t}.500 760v45M{t - 4} 771l9-9" />{/each}
          </g>
          <rect x="{f.col}.500" y="822.500" width="42" height="42" fill="#5a5a5a" stroke="#fff" />
          <circle cx={f.axis} cy="830" r="12" stroke="#008000" />
          <g class="thin">
            <text x={f.left[1]} y="757">{f.left[0]}</text>
            <text x={f.right[1]} y="757">{f.right[0]}</text>
            <text transform="translate({f.x - 7} 822) rotate(-90)">300</text>
            <text x={f.name} y="832" class="mark">KZa</text>
          </g>
          <text class="bold" x={f.axis} y="836" text-anchor="middle">{f.no}</text>
        {/each}

        <g class="thin">
          <text x="22" y="94" text-anchor="end">3600</text>
          <text x="1157" y="94">7800</text>
          <text x="1186" y="28">38000</text>
          <text x="920" y="190">150</text>
          <text x="929" y="265" class="mark">KZa</text>
        </g>
        <g class="bold">
          <text x="33" y="125" text-anchor="end">3600</text>
          <text x="1163" y="125">7800</text>
          <text x="1193" y="20">38000</text>
          <text x="139" y="19" text-anchor="middle">2</text>
          <text x="363" y="19" text-anchor="middle">3</text>
          <text x="909" y="19" text-anchor="middle">4</text>
          <text x="13" y="283" text-anchor="middle">J</text>
        </g>

        <g shape-rendering="auto">
          <path d="M50 792V772" stroke="#0f0" stroke-width="4" />
          <path d="M45 774l5-12 5 12z" fill="#0c0" />
          <path d="M50 792h20" stroke="#f00" stroke-width="4" />
          <path d="M68 787l12 5-12 5z" fill="#c00" />
          <circle cx="50" cy="792" r="6" fill="#0000c8" />
          <text x="50" y="762" text-anchor="middle" font-size="16" fill="#0f0">Y</text>
          <text x="86" y="798" text-anchor="middle" font-size="16" fill="#f00">X</text>
        </g>
      </svg>

      <div class="dialog" role="dialog" aria-labelledby="dialog-title">
        <div class="dialog-bar">
          <h2 id="dialog-title">识别柱表</h2>
          <button aria-label="最小化"><svg viewBox="0 0 10 10"><path d="M1 7.500h8" stroke="#fff" stroke-width="2" /></svg></button>
          <button aria-label="最大化"><svg viewBox="0 0 10 10"><path d="M1.500 2.500h7v6h-7zM1 2h8" fill="none" stroke="#fff" /></svg></button>
          <button aria-label="关闭"><svg viewBox="0 0 10 10"><path d="M1 1l8 8M9 1L1 9" stroke="#fff" stroke-width="2" /></svg></button>
        </div>
        <div class="dialog-body">
          <div class="buttons">
            {#each gridButtons as label}<button>{label}</button>{/each}
          </div>
          <div class="grid">
            <table>
              <colgroup>
                <col class="w20" /><col class="w73" /><col class="w73" /><col class="w73" /><col class="w87" />
                <col class="w73" /><col class="w111" /><col class="w113" /><col class="w73" /><col class="w73" />
              </colgroup>
              <thead>
                <tr>
                  <td class="blank"></td>
                  {#each columns as _, c}<td class="slot" class:active={c === cell.col}></td>{/each}
                </tr>
                <tr>
                  <td class="side"></td>
                  {#each columns as name}
                    <th><button>{name}<i class="arrow"></i></button></th>
                  {/each}
                </tr>
              </thead>
              <tbody>
                {#each rows as row, r}
                  <tr>
                    <td class="side" class:active={r === cell.row}></td>
                    {#each row as value, c}
                      <td
                        class:warn={c >= 3 && c <= 6}
                        class:picked={r === cell.row && c === cell.col}
                        onclick={() => (cell = { row: r, col: c })}
                      >{value}</td>
                    {/each}
                  </tr>
                {/each}
              </tbody>
            </table>
          </div>
          <p>提示:请在第一行的空白行中单击鼠标从下拉框中选择对应列关系</p>
          <div class="buttons end">
            <button class="primary">识别</button>
            <button>取消</button>
          </div>
        </div>
      </div>
    </div>
  </main>

  <svg class="pointer" width="1100" height="340" aria-hidden="true">
    <path d="M1042 50L962 307l3 1-13 13-4-19 4 1L1041 50z" fill="#fb3838" />
  </svg>
</div>

<style>
  :global(body) {
    overflow: hidden;
  }

  .app {
    background: #fff;
    color: #000;
    display: flex;
    flex-direction: column;
    font-family: 'Noto Sans', 'Noto Sans CJK SC', sans-serif;
    font-size: 12px;
    height: 100vh;
    line-height: 16px;
    overflow: hidden;
    position: relative;
  }

  button {
    align-items: center;
    background: none;
    border: 0;
    color: inherit;
    display: flex;
    font: inherit;
    margin: 0;
    padding: 0;
    white-space: nowrap;
  }

  .icon {
    flex: none;
    height: 16px;
    width: 16px;
  }

  .icon.big {
    height: 30px;
    width: 30px;
  }

  .arrow {
    border: 3px solid transparent;
    border-bottom: 0;
    border-top: 3px solid #444;
    flex: none;
    height: 0;
    width: 0;
  }

  .arrow.off {
    border-top-color: #aaa;
  }

  .arrow.wide {
    border-left-width: 4px;
    border-right-width: 4px;
    border-top-width: 4px;
  }

  .arrow.more {
    box-shadow: 0 -5px 0 -2px #666;
  }

  header {
    display: flex;
    flex: none;
  }

  .logo {
    padding: 6px 3px 3px 5px;
    width: 41px;
  }

  .logo svg {
    height: 28px;
    width: 28px;
  }

  .corner {
    align-self: flex-end;
    border-bottom: 4px solid #777;
    border-left: 4px solid transparent;
  }

  .head-main {
    border-bottom: 1px solid #d5d5d5;
    flex: 1;
    min-width: 0;
  }

  .title-row {
    align-items: center;
    display: grid;
    grid-template-columns: 1fr auto 1fr;
    height: 20px;
    margin-bottom: 2px;
  }

  h1,
  h2 {
    font-size: 12px;
    font-weight: 400;
    margin: 0;
    white-space: nowrap;
  }

  .quick {
    display: flex;
    gap: 7px;
    padding-left: 9px;
  }

  .quick button {
    gap: 4px;
  }

  .win {
    display: flex;
    gap: 26px;
    justify-content: flex-end;
    padding-right: 4px;
  }

  .win svg,
  .dialog-bar svg {
    height: 10px;
    width: 10px;
  }

  .tab-row {
    display: flex;
    height: 18px;
    justify-content: space-between;
  }

  nav {
    display: flex;
    padding-left: 5px;
  }

  nav button {
    color: #333;
    padding: 0 13px;
  }

  nav .active {
    background: #5ba5f6;
    color: #fff;
  }

  .user {
    align-items: center;
    display: flex;
    gap: 7px;
    padding-bottom: 1px;
  }

  .user .icon {
    height: 15px;
    width: 15px;
  }

  .who {
    gap: 3px;
    margin-right: 3px;
  }

  .help {
    color: #8e8e8e;
    font-size: 16px;
    font-weight: 600;
    gap: 3px;
  }

  .user input {
    border: 1px solid #aaa;
    border-right: 0;
    box-sizing: border-box;
    font: inherit;
    font-size: 11px;
    height: 17px;
    padding: 0 2px;
    width: 112px;
  }

  .user input::placeholder {
    color: #777;
  }

  .ribbon {
    background: linear-gradient(#fff 45%, #e8ecee);
    border-bottom: 1px solid #898c90;
    display: flex;
    flex: none;
    padding: 2px 0 3px;
  }

  .group {
    border-right: 1px solid #c6c9cb;
    display: flex;
    flex-direction: column;
    height: 92px;
    padding: 0 11px 0 9px;
  }

  .group.tight {
    padding-left: 7px;
  }

  .tools,
  .cols {
    display: flex;
    gap: 11px;
  }

  .tight > .tools {
    gap: 8px;
  }

  .tools {
    height: 73px;
    padding-top: 1px;
  }

  .tool {
    gap: 3px;
    height: 23px;
  }

  .tool .arrow {
    margin-left: 2px;
  }

  .tool:disabled,
  .tool-big:disabled {
    color: #aaa;
  }

  .tool-big {
    box-sizing: border-box;
    flex-direction: column;
    height: 68px;
    margin-top: 2px;
    min-width: 30px;
    padding-top: 2px;
  }

  .tool-big span {
    margin: 5px 0 4px;
  }

  .tool-big.active {
    background: #c9d9f0;
    padding-left: 1px;
    padding-right: 1px;
  }

  .group-label {
    gap: 6px;
    justify-content: center;
  }

  .tight .group-label {
    padding-top: 2px;
  }

  .selectors {
    background: #c9ccd1;
    border-bottom: 1px solid #8a8c91;
    display: flex;
    flex: none;
    gap: 6px;
    padding: 3px 0;
  }

  .selectors label {
    position: relative;
  }

  .selectors label::after {
    border: 3px solid transparent;
    border-bottom: 0;
    border-top-color: #444;
    content: '';
    pointer-events: none;
    position: absolute;
    right: 4px;
    top: 10px;
  }

  select {
    appearance: none;
    background: #fff;
    border: 1px solid #a9abae;
    border-radius: 0;
    color: #000;
    display: block;
    font: inherit;
    height: 22px;
    padding: 0 3px;
    width: 99px;
  }

  main {
    display: flex;
    flex: 1;
    min-height: 0;
  }

  .tree {
    border-right: 1px solid #c3c6cb;
    flex: none;
    width: 165px;
  }

  .tree-head {
    background: #efefef;
    border-bottom: 1px solid #c3c6cb;
    display: flex;
    gap: 4px;
    height: 27px;
    padding: 0 3px 0 2px;
  }

  .tree-head button:first-child {
    margin-right: auto;
  }

  .mode {
    align-self: center;
    background: #e6f1fd;
    border: 1px solid #5ba5f6;
    border-radius: 3px;
    height: 24px;
    justify-content: center;
    width: 25px;
  }

  ul {
    list-style: none;
    margin: 0;
    padding: 4px 0;
  }

  li {
    align-items: center;
    display: flex;
    height: 24px;
  }

  li button {
    gap: 3px;
    height: 21px;
    padding-left: 2px;
    width: 100%;
  }

  li .child {
    gap: 5px;
    margin-left: 17px;
    padding-left: 5px;
  }

  li .active {
    background: #c9d9f0;
  }

  .docks {
    display: flex;
    flex: none;
    flex-direction: column;
    gap: 3px;
    padding-left: 4px;
    width: 298px;
  }

  .dock {
    border: 1px solid #c0c3c9;
    border-top: 0;
    box-sizing: border-box;
    display: flex;
    flex-direction: column;
    min-height: 0;
  }

  .drawings {
    flex: 0 0 40%;
  }

  .layers {
    border-bottom: 0;
    flex: 1;
  }

  .dock-bar {
    background: #d2d4da;
    border-bottom: 1px solid #c0c3c9;
    display: flex;
    flex: none;
    height: 11px;
    justify-content: flex-end;
    padding-right: 4px;
  }

  .dock-bar button {
    color: #666;
    font-size: 14px;
    line-height: 11px;
  }

  .dock-tabs {
    background: #efefef;
    border-bottom: 1px solid #c0c3c9;
    display: flex;
    flex: none;
    height: 21px;
  }

  .dock-tabs button {
    background: #e2e2e2;
    border-right: 1px solid #c0c3c9;
    color: #888;
    padding: 0 8px;
  }

  .dock-tabs .active {
    background: #efefef;
    color: #222;
    font-weight: 600;
  }

  .dock-tools {
    background: #efefef;
    border-bottom: 1px solid #c0c3c9;
    color: #333;
    display: flex;
    flex: none;
    gap: 11px;
    height: 29px;
    padding-left: 4px;
  }

  .dock-tools button {
    gap: 3px;
  }

  .dock-tools .arrow {
    margin-left: 4px;
  }

  .dock-tools.plain {
    gap: 14px;
  }

  table {
    border-collapse: separate;
    border-spacing: 0;
    table-layout: fixed;
  }

  th,
  td {
    border-bottom: 1px solid #c6c8cc;
    border-right: 1px solid #c6c8cc;
    box-sizing: border-box;
    height: 21px;
    line-height: 16px;
    overflow: hidden;
    padding: 0;
    text-align: left;
    white-space: nowrap;
  }

  .docks th {
    background: #efefef;
    color: #333;
    font-weight: 400;
    text-align: center;
  }

  .sheet {
    display: flex;
    flex: 1;
    min-height: 0;
  }

  .sheet-body {
    background: linear-gradient(#efefef 25px, #fff 25px);
    flex: 1;
    overflow: hidden;
  }

  .sheet table {
    width: 209px;
  }

  .sheet th {
    height: 25px;
  }

  .name {
    width: 127px;
  }

  .lock {
    text-align: center;
    width: 41px;
  }

  .lock .icon {
    display: block;
    margin: 0 auto;
  }

  .no {
    padding-left: 4px;
    width: 41px;
  }

  .docks th.active {
    background: #80bafa;
    border-color: #6aa6e8;
    color: #fff;
    font-weight: 600;
    padding: 0;
  }

  .node {
    align-items: center;
    display: flex;
    gap: 6px;
    height: 20px;
    padding-left: 1px;
  }

  .node.depth1 {
    padding-left: 11px;
  }

  .node.depth2 {
    gap: 4px;
    padding-left: 18px;
  }

  .node button {
    border: 1px solid #777;
    border-radius: 2px;
    height: 14px;
    justify-content: center;
    width: 14px;
  }

  .guide {
    background: linear-gradient(#c0c3c9, #c0c3c9) 0 center / 100% 1px no-repeat;
    border-left: 1px solid #c0c3c9;
    height: 20px;
    width: 18px;
  }

  .current .name,
  .current .no {
    background: #d4e9ff;
  }

  .current .no {
    outline: 2px solid #7a7a7a;
    outline-offset: -2px;
  }

  .scroll {
    align-items: center;
    display: flex;
    flex-direction: column;
    padding: 3px 0;
    width: 14px;
  }

  .up,
  .down {
    border: 4px solid transparent;
    border-bottom-color: #222;
    border-top: 0;
  }

  .down {
    border-bottom: 0;
    border-top: 4px solid #222;
  }

  .track {
    flex: 1;
    padding: 3px 0;
  }

  .thumb {
    background: #cdcdcd;
    border-radius: 4px;
    height: 65%;
    width: 8px;
  }

  .layer-body {
    background: linear-gradient(#efefef 21px, #fff 21px);
    flex: 1;
  }

  .layer-body table {
    width: 238px;
  }

  .on {
    width: 51px;
  }

  .color {
    text-align: center;
    width: 36px;
  }

  .title {
    padding-left: 4px;
    width: 151px;
  }

  .tri {
    display: block;
    height: 8px;
    margin: 0 auto;
    width: 6px;
  }

  .on input {
    appearance: none;
    background: #fff;
    border: 1px solid #777;
    border-radius: 2px;
    display: block;
    height: 14px;
    margin: 0 auto;
    width: 14px;
  }

  .on input:checked {
    background: #4f9df5;
    border-color: #4f9df5;
  }

  .on input:checked::after {
    border: solid #fff;
    border-width: 0 0 2px 2px;
    content: '';
    display: block;
    height: 3px;
    margin: 2px auto;
    transform: rotate(-45deg);
    width: 6px;
  }

  .splitter {
    align-items: center;
    display: flex;
    padding-top: 14px;
    width: 4px;
  }

  .splitter button {
    background: #5b6670;
    height: 100px;
    width: 4px;
  }

  .splitter button::after {
    border: 3px solid transparent;
    border-left: 0;
    border-right-color: #ddd;
    content: '';
  }

  .canvas {
    background: #000;
    flex: 1;
    min-width: 0;
    overflow: hidden;
    position: relative;
  }

  .canvas > svg {
    display: block;
  }

  .thin {
    fill: #fff;
    font-family: 'Liberation Sans Narrow', 'Liberation Sans', sans-serif;
    font-size: 16px;
  }

  .thin .mark {
    fill: #f0f;
    font-size: 18px;
  }

  .bold {
    fill: #fff;
    font-size: 17px;
  }

  .dialog {
    background: #f0f0f0;
    border: 1px solid #c0c5d0;
    border-top: 0;
    box-sizing: border-box;
    display: flex;
    flex-direction: column;
    height: 656px;
    left: 83px;
    position: absolute;
    top: 38px;
    width: 804px;
  }

  .dialog-bar {
    align-items: center;
    background: #2d7fe0;
    color: #fff;
    display: flex;
    flex: none;
    gap: 18px;
    height: 27px;
    margin: 0 -1px;
    padding: 0 9px 0 8px;
  }

  .dialog-bar h2 {
    margin-right: auto;
  }

  .dialog-body {
    display: flex;
    flex: 1;
    flex-direction: column;
    min-height: 0;
    padding: 11px;
  }

  .buttons {
    display: flex;
    gap: 6px;
  }

  .buttons.end {
    justify-content: flex-end;
  }

  .buttons button {
    background: #fafafa;
    border: 1px solid #bcc4d6;
    border-radius: 3px;
    color: #333;
    height: 26px;
    justify-content: center;
    width: 80px;
  }

  .buttons .primary {
    background: #2d7fe0;
    border-color: #2d7fe0;
    color: #fff;
  }

  .grid {
    background: linear-gradient(#efefef, #efefef) 0 0 / 100% 21px no-repeat, linear-gradient(#efefef, #efefef) 0 0 / 20px 100% no-repeat, #fff;
    border: 1px solid #c0c3c9;
    flex: 1;
    margin-top: 6px;
  }

  .grid table {
    width: 769px;
  }

  .grid td,
  .grid th {
    background: #fff;
    padding: 2px 0 0 3px;
  }

  .grid th {
    font-weight: 700;
  }

  .grid th button {
    justify-content: space-between;
    padding-right: 4px;
    width: 100%;
  }

  .grid th .arrow {
    border-top-color: #000;
  }

  .grid .blank {
    border: 0;
  }

  .grid .slot,
  .grid .side {
    background: #efefef;
    border-color: #d5d5d5;
  }

  .grid .side {
    border-right: 0;
  }

  .grid .active {
    background: #80bafa;
    border: 1px solid #6aa6e8;
  }

  .grid .warn {
    background: #c4727e;
    color: #1a0508;
  }

  .grid .picked {
    outline: 3px solid #6aa6e8;
    outline-offset: -2px;
  }

  .w20 { width: 20px; }
  .w73 { width: 73px; }
  .w87 { width: 87px; }
  .w111 { width: 111px; }
  .w113 { width: 113px; }

  .dialog p {
    margin: 7px 0 6px;
  }

  .pointer {
    left: 0;
    pointer-events: none;
    position: absolute;
    top: 0;
  }
</style>
